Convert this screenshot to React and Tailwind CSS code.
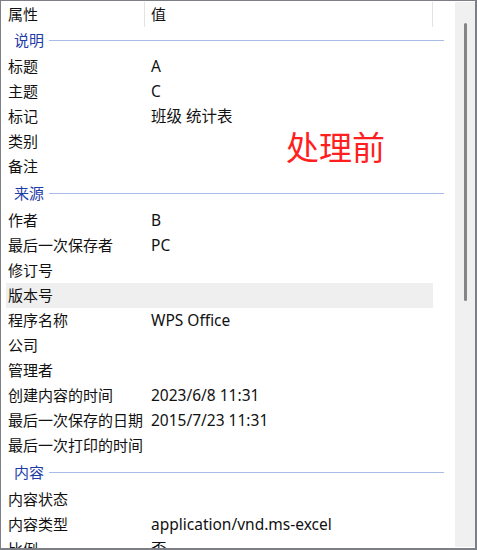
import React from 'react';

const sections = [
  {
    title: '说明',
    first: true,
    rows: [
      ['标题', 'A'],
      ['主题', 'C'],
      ['标记', '班级 统计表'],
      ['类别', ''],
      ['备注', ''],
    ],
  },
  {
    title: '来源',
    rows: [
      ['作者', 'B'],
      ['最后一次保存者', 'PC'],
      ['修订号', ''],
      ['版本号', '', true],
      ['程序名称', 'WPS Office'],
      ['公司', ''],
      ['管理者', ''],
      ['创建内容的时间', '2023/6/8 11:31'],
      ['最后一次保存的日期', '2015/7/23 11:31'],
      ['最后一次打印的时间', ''],
    ],
  },
  {
    title: '内容',
    rows: [
      ['内容状态', ''],
      ['内容类型', 'application/vnd.ms-excel'],
      ['比例', '否'],
    ],
  },
];

const font = { fontFamily: '"Noto Sans", "Noto Sans CJK SC", sans-serif' };

const Row = ({ label, value, selected }) => (
  <div className={`ml-[5px] w-[427px] h-[25px] flex items-center pl-[2px] shrink-0 ${selected ? 'bg-[#efefef]' : ''}`}>
    <div className="w-[143px] shrink-0 whitespace-nowrap">{label}</div>
    <div className="whitespace-nowrap text-[15.5px]">{value}</div>
  </div>
);

const Section = ({ title, first }) => (
  <div className={`flex items-center pl-[13px] pr-[11px] shrink-0 ${first ? 'h-[27px]' : 'h-[29px]'}`}>
    <span className="text-[#1e3ca8]">{title}</span>
    <div className="flex-1 h-px bg-[#aabde6] ml-[5px]" />
  </div>
);

const App = () => {
  return (
    <div
      className="w-[477px] h-[550px] bg-white border-[#7c7f86] border-l border-t border-r-2 border-b-2 flex overflow-hidden text-[15px] text-[#111]"
      style={font}
    >
      <div className="relative flex-1 flex flex-col overflow-hidden">
        <div className="flex pt-px shrink-0">
          <div className="w-[144px] h-[25px] pl-[7px] border-r border-[#e3e3e3] flex items-center">属性</div>
          <div className="w-[288px] h-[25px] pl-[6px] border-r border-[#e3e3e3] flex items-center">值</div>
        </div>
        {sections.map((s) => (
          <React.Fragment key={s.title}>
            <Section title={s.title} first={s.first} />
            {s.rows.map(([l, v, sel]) => (
              <Row key={l} label={l} value={v} selected={sel} />
            ))}
          </React.Fragment>
        ))}
        <div className="absolute left-[285px] top-[130px] text-[33px] leading-none text-[#ff1f1f]">处理前</div>
      </div>
      <div className="w-[20px] my-px bg-[#f0f0f0] shrink-0 flex justify-center">
        <div className="mt-[21px] ml-px w-[3px] h-[278px] rounded-full bg-[#858585]" />
      </div>
    </div>
  );
};

export default App;
